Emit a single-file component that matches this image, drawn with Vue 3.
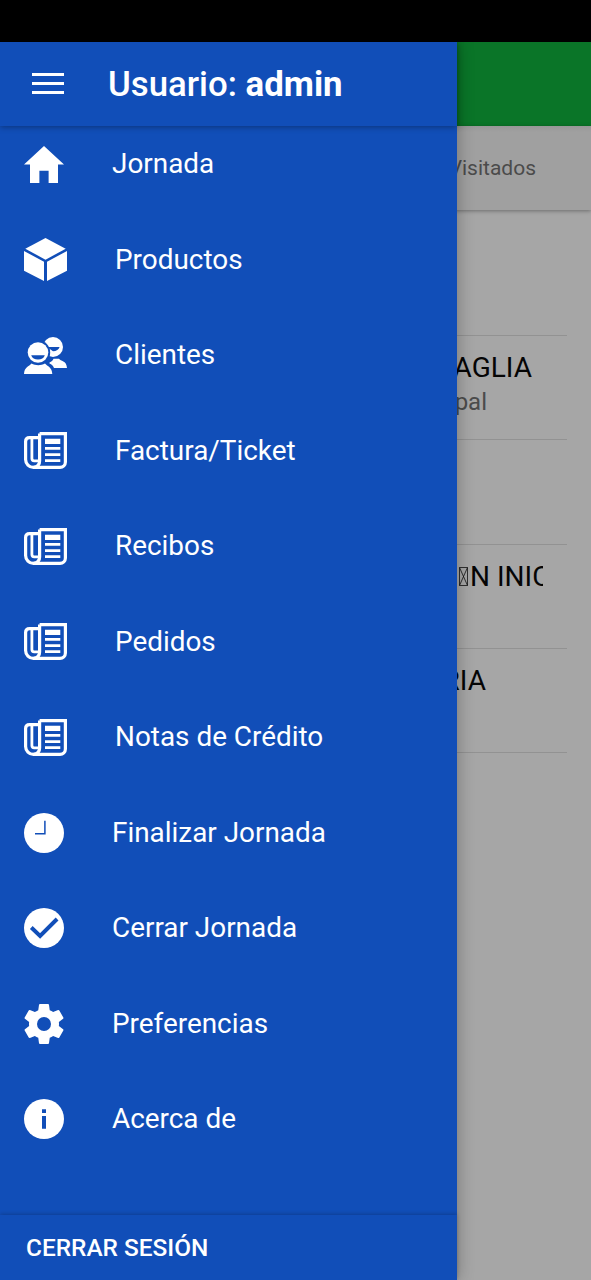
<template>
  <div class="screen">
    <div class="status-bar"></div>

    <div class="app">
      <!-- Page behind the menu -->
      <main class="page">
        <div class="page-toolbar"></div>
        <div class="page-tabs">
          <span class="page-tab">Visitados</span>
        </div>
        <ul class="clients">
          <li class="client client-empty"></li>
          <li class="client">
            <p class="client-name name-first">AGLIA</p>
            <p class="client-note">pal</p>
          </li>
          <li class="client"></li>
          <li class="client">
            <p class="client-name name-cut">
              <svg class="missing-glyph" viewBox="0 0 9 19">
                <path d="M.5.5h8v18h-8zM.5.5l8 18M8.500.5l-8 18" />
              </svg>N INIC
            </p>
          </li>
          <li class="client">
            <p class="client-name name-last">RIA</p>
          </li>
        </ul>
      </main>

      <!-- Side menu -->
      <aside class="menu">
        <header class="menu-header">
          <svg class="menu-toggle" viewBox="0 0 32 21">
            <path d="M0 0h32v3H0zM0 9h32v3H0zM0 18h32v3H0z" />
          </svg>
          <h1 class="menu-title">Usuario: <strong>admin</strong></h1>
        </header>

        <nav class="menu-list">
          <a v-for="item in items" :key="item.label" class="menu-item">
            <svg v-if="item.icon === 'home'" class="icon icon-home" viewBox="48 64 416 384">
              <path d="M208 448V320h96v128h97.600V256H464L256 64 48 256h62.400v192z" />
            </svg>

            <svg v-else-if="item.icon === 'cube'" class="icon icon-cube" viewBox="0 0 43 43">
              <path d="M21.500 0l20.200 10.700-20.200 11L1.300 10.700z" />
              <path d="M0 13l20 10.700V43L0 32.800zM43 13L23 23.700V43l20-10.200z" />
            </svg>

            <svg v-else-if="item.icon === 'people'" class="icon icon-people" viewBox="0 0 43 37">
              <circle cx="29" cy="10" r="10" />
              <path d="M25.500 25.500c2-.8 3.300-2 4-3.700h5.500c1.500 2.500 7.500 1.500 8 9.200H30c-.8-2.300-2.300-3.700-4.500-4.500z" />
              <path class="cut" d="M23 10h12.600c-.8 2.700-3.100 4.200-6.600 4.200z" />
              <circle class="cut" cx="14" cy="15.500" r="12.200" />
              <circle cx="14" cy="15.500" r="10.300" />
              <path d="M0 37c.3-7 5-7.500 7.500-10.500 4 2.300 9.500 2.300 13.500 0C23.500 29.500 28 30 28.300 37z" />
              <path class="cut" d="M7.200 18.300h13.600c-1 2.900-3.300 4.200-6.800 4.200s-5.800-1.300-6.800-4.200z" />
            </svg>

            <svg v-else-if="item.icon === 'paper'" class="icon icon-paper" viewBox="0 0 43 37">
              <path class="line" d="M15.600 1.600h25.800V30a5.400 5.400 0 0 1-5.400 5.400H9.500A7.900 7.900 0 0 1 1.600 27.500V9.500q0-3.900 4-3.900h8.500" />
              <path class="line" d="M15.600 1.600V29q0 5.600-6 6.300" />
              <path class="line thin" d="M7.900 6v20.500q0 2.300 2.300 2.300h4" />
              <path d="M21 6.800h15.300v5.200H21zM21 15h15.300v2.700H21zM21 21.200h15.300v2.700H21zM21 27.300h15.300V30H21z" />
            </svg>

            <svg v-else-if="item.icon === 'clock'" class="icon" viewBox="0 0 40 40">
              <circle cx="20" cy="20" r="20" />
              <path class="hands" d="M20.900 7.700v13H11" />
            </svg>

            <svg v-else-if="item.icon === 'check'" class="icon" viewBox="0 0 40 40">
              <circle cx="20" cy="20" r="20" />
              <path class="tick" d="M7.300 19.500l8.800 8.500 17-17" />
            </svg>

            <svg v-else-if="item.icon === 'gear'" class="icon" viewBox="2 2 20 20">
              <path d="M19.430 12.980c.04-.32.07-.64.07-.98s-.03-.66-.07-.98l2.110-1.650c.19-.15.24-.42.12-.64l-2-3.460c-.12-.22-.39-.3-.61-.22l-2.490 1c-.52-.4-1.080-.73-1.690-.98l-.38-2.650C14.460 2.180 14.250 2 14 2h-4c-.25 0-.46.18-.49.42l-.38 2.650c-.61.25-1.170.59-1.690.98l-2.490-1c-.23-.09-.49 0-.61.22l-2 3.460c-.13.22-.07.49.12.64l2.110 1.650c-.04.32-.07.65-.07.98s.03.66.07.98l-2.110 1.650c-.19.15-.24.42-.12.64l2 3.460c.12.22.39.3.61.22l2.490-1c.52.4 1.080.73 1.690.98l.38 2.650c.03.24.24.42.49.42h4c.25 0 .46-.18.49-.42l.38-2.650c.61-.25 1.170-.59 1.690-.98l2.490 1c.23.09.49 0 .61-.22l2-3.460c.12-.22.07-.49-.12-.64l-2.110-1.650z" />
              <circle class="cut" cx="12" cy="12" r="3.500" />
            </svg>

            <svg v-else class="icon" viewBox="0 0 40 40">
              <circle cx="20" cy="20" r="20" />
              <path class="cut" d="M18 10.300h4v3.700h-4zM18 17h4v12.700h-4z" />
            </svg>

            <span class="menu-label">{{ item.label }}</span>
          </a>
        </nav>

        <footer class="menu-footer">
          <button class="logout">CERRAR SESIÓN</button>
        </footer>
      </aside>
    </div>
  </div>
</template>

<script setup>
const items = [
  { label: 'Jornada', icon: 'home' },
  { label: 'Productos', icon: 'cube' },
  { label: 'Clientes', icon: 'people' },
  { label: 'Factura/Ticket', icon: 'paper' },
  { label: 'Recibos', icon: 'paper' },
  { label: 'Pedidos', icon: 'paper' },
  { label: 'Notas de Crédito', icon: 'paper' },
  { label: 'Finalizar Jornada', icon: 'clock' },
  { label: 'Cerrar Jornada', icon: 'check' },
  { label: 'Preferencias', icon: 'gear' },
  { label: 'Acerca de', icon: 'info' }
];
</script>

<style>
body {
  background: #a6a6a6;
}
</style>

<style scoped>
.screen {
  display: flex;
  flex-direction: column;
  height: 1280px;
  overflow: hidden;
  font-family: Roboto, sans-serif;
}

.status-bar {
  flex: none;
  height: 42px;
  background: #000;
}

.app {
  position: relative;
  flex: 1;
  min-height: 0;
  overflow: hidden;
}

.page {
  height: 100%;
  background: #a6a6a6;
}

.page-toolbar {
  height: 84px;
  background: #0a7528;
}

.page-tabs {
  display: flex;
  align-items: center;
  justify-content: flex-end;
  height: 84px;
  padding-right: 55px;
  box-sizing: border-box;
  background: linear-gradient(#989898, #a0a0a0 6px);
  box-shadow: 0 1px 4px rgba(0, 0, 0, 0.35);
}

.page-tab {
  font-size: 21px;
  color: #4b4b4b;
}

.clients {
  margin: 0 24px 0 0;
  padding: 22px 0 0;
  list-style: none;
}

.client {
  height: 104.200px;
  padding-top: 14px;
  box-sizing: border-box;
  border-bottom: 1px solid #929292;
}

.client p {
  margin: 0;
}

.client-name {
  font-size: 28px;
  line-height: 36px;
  text-align: right;
  white-space: nowrap;
  color: #050505;
}

.name-first {
  padding-right: 35px;
}

.name-last {
  padding-right: 81px;
}

.client .name-cut {
  width: 84px;
  margin-left: 459px;
  text-align: left;
  overflow: hidden;
}

.missing-glyph {
  width: 9px;
  height: 19px;
  margin-right: 2px;
  fill: none;
  stroke: #111;
  stroke-width: 0.8;
}

.client-note {
  padding-right: 80px;
  font-size: 24px;
  line-height: 32px;
  text-align: right;
  color: #4b4b4b;
}

/* The menu slides over the page */
.menu {
  position: absolute;
  top: 0;
  left: 0;
  display: flex;
  flex-direction: column;
  width: 457px;
  height: 100%;
  background: #114eb8;
  box-shadow: 0 0 16px rgba(0, 0, 0, 0.3);
}

.menu-header {
  display: flex;
  align-items: center;
  flex: none;
  height: 84px;
  padding: 0 0 1px 32px;
  box-sizing: border-box;
  box-shadow: 0 1px 6px rgba(0, 0, 0, 0.35);
}

.menu-toggle {
  width: 32px;
  height: 21px;
  fill: #fff;
}

.menu-title {
  margin: 0 0 0 44px;
  font-size: 34.800px;
  font-weight: 500;
  white-space: nowrap;
  color: #fff;
}

.menu-title strong {
  font-weight: 700;
}

.menu-list {
  display: flex;
  flex-direction: column;
  flex: 1;
  gap: 23.500px;
  padding: 1.700px 0 0 24px;
}

.menu-item {
  display: flex;
  align-items: center;
  gap: 48px;
  flex: none;
  height: 72px;
}

.icon {
  flex: none;
  width: 40px;
  height: 40px;
  margin-top: 1px;
  fill: #fff;
}

.icon-home {
  height: 37px;
}

.icon-cube {
  width: 43px;
  height: 43px;
}

.icon-people,
.icon-paper {
  width: 43px;
  height: 37px;
}

.icon .cut {
  fill: #114eb8;
}

.icon .line {
  fill: none;
  stroke: #fff;
  stroke-width: 3.200;
}

.icon .thin {
  stroke-width: 2.800;
}

.icon .hands {
  fill: none;
  stroke: #114eb8;
  stroke-width: 1.500;
}

.icon .tick {
  fill: none;
  stroke: #114eb8;
  stroke-width: 3.900;
}

.menu-label {
  font-size: 27.900px;
  white-space: nowrap;
  color: #fff;
}

.menu-footer {
  display: flex;
  align-items: center;
  flex: none;
  height: 65px;
  padding-left: 26px;
  box-shadow: 0 -1px 4px rgba(0, 0, 0, 0.22);
}

.logout {
  padding: 0;
  border: 0;
  background: none;
  font-family: inherit;
  font-size: 24.400px;
  font-weight: 500;
  color: #fff;
}
</style>
